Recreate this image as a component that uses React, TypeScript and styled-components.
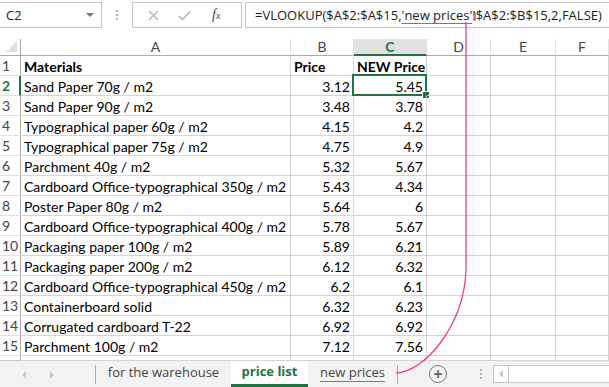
import React from 'react';
import styled, { createGlobalStyle } from 'styled-components';

const GREEN = '#217346';
const PINK = '#f0407a';
const GRID = '#d4d4d4';
const HEAD_LINE = '#ababab';

const rows: [string, string, string][] = [
    ['Sand Paper 70g / m2', '3.12', '5.45'],
    ['Sand Paper 90g / m2', '3.48', '3.78'],
    ['Typographical paper 60g / m2', '4.15', '4.2'],
    ['Typographical paper 75g / m2', '4.75', '4.9'],
    ['Parchment 40g / m2', '5.32', '5.67'],
    ['Cardboard Office-typographical 350g / m2', '5.43', '4.34'],
    ['Poster Paper 80g / m2', '5.64', '6'],
    ['Cardboard Office-typographical 400g / m2', '5.78', '5.67'],
    ['Packaging paper 100g / m2', '5.89', '6.21'],
    ['Packaging paper 200g / m2', '6.12', '6.32'],
    ['Cardboard Office-typographical 450g / m2', '6.2', '6.1'],
    ['Containerboard solid', '6.32', '6.23'],
    ['Corrugated cardboard T-22', '6.92', '6.92'],
    ['Parchment 100g / m2', '7.12', '7.56'],
];

const columns = ['A', 'B', 'C', 'D', 'E', 'F'];

const GlobalStyle = createGlobalStyle`
    html, body {
        margin: 0;
        padding: 0;
        background: #ffffff;
        overflow: hidden;
    }
    * {
        box-sizing: border-box;
    }
`;

const Page = styled.div`
    position: relative;
    width: 609px;
    height: 387px;
    overflow: hidden;
    background: #ffffff;
    font-family: 'Lato', 'Liberation Sans', sans-serif;
    display: flex;
    flex-direction: column;
`;

const FormulaBar = styled.div`
    height: 39px;
    flex: none;
    display: flex;
    align-items: flex-start;
    padding-top: 2px;
    font-family: 'Open Sans', 'Liberation Sans', sans-serif;
    font-size: 13px;
    color: #222;
`;

const NameBox = styled.div`
    width: 102px;
    height: 26px;
    border: 1px solid #c6c6c6;
    display: flex;
    align-items: center;
    justify-content: space-between;
    padding: 0 7px 0 6px;
    border-left: none;
`;

const DropArrow = styled.span`
    width: 0;
    height: 0;
    border-left: 4px solid transparent;
    border-right: 4px solid transparent;
    border-top: 4px solid #777;
`;

const Grip = styled.div`
    width: 30px;
    height: 26px;
    display: flex;
    flex-direction: column;
    align-items: center;
    justify-content: center;
    gap: 2px;
    & span {
        width: 2px;
        height: 2px;
        background: #b5b5b5;
    }
`;

const ActionBox = styled.div`
    width: 110px;
    height: 26px;
    border: 1px solid #c6c6c6;
    display: flex;
    align-items: center;
    padding-left: 15px;
    gap: 19px;
    color: #a6a6a6;
`;

const Fx = styled.span`
    font-family: 'Liberation Serif', serif;
    font-style: italic;
    font-size: 14px;
    color: #444;
    margin-left: 2px;
`;

const FormulaInput = styled.div`
    flex: 1;
    height: 26px;
    margin-left: 3px;
    border: 1px solid #c6c6c6;
    border-right: none;
    display: flex;
    align-items: center;
    padding-left: 9px;
    white-space: nowrap;
    overflow: hidden;
`;

const Marked = styled.span`
    text-decoration: underline;
    text-decoration-color: ${PINK};
    text-underline-offset: 3px;
`;

const Sheet = styled.div`
    flex: none;
    display: grid;
    grid-template-columns: 21px 270px 63px 73px 64px 65px 1fr;
    grid-template-rows: 17px repeat(15, 20px) 5px;
    font-size: 14px;
    color: #000;
`;

const Corner = styled.div`
    border-right: 1px solid ${HEAD_LINE};
    border-bottom: 1px solid ${HEAD_LINE};
    position: relative;
    &::after {
        content: '';
        position: absolute;
        right: 3px;
        bottom: 3px;
        width: 0;
        height: 0;
        border-left: 11px solid transparent;
        border-bottom: 11px solid #dfdfdf;
    }
`;

const ColHead = styled.div<{ $active?: boolean }>`
    display: flex;
    align-items: center;
    justify-content: center;
    font-size: 14px;
    line-height: 1;
    color: ${(p) => (p.$active ? GREEN : '#444')};
    font-weight: ${(p) => (p.$active ? 700 : 400)};
    background: ${(p) => (p.$active ? '#e1e1e1' : '#fff')};
    border-right: 1px solid #e1e1e1;
    border-bottom: ${(p) => (p.$active ? `2px solid ${GREEN}` : `1px solid ${HEAD_LINE}`)};
`;

const RowHead = styled.div<{ $active?: boolean }>`
    display: flex;
    align-items: center;
    padding-left: 2px;
    font-size: 14px;
    color: ${(p) => (p.$active ? GREEN : '#444')};
    font-weight: ${(p) => (p.$active ? 700 : 400)};
    border-right: ${(p) => (p.$active ? `2px solid ${GREEN}` : `1px solid ${HEAD_LINE}`)};
    border-bottom: 1px solid #e1e1e1;
`;

const Cell = styled.div<{ $num?: boolean; $bold?: boolean }>`
    display: flex;
    align-items: center;
    justify-content: ${(p) => (p.$num ? 'flex-end' : 'flex-start')};
    padding: 1px 3px 0 3px;
    font-weight: ${(p) => (p.$bold ? 700 : 400)};
    border-right: 1px solid ${GRID};
    border-bottom: 1px solid ${GRID};
    white-space: nowrap;
    overflow: hidden;
    position: relative;
`;

const Selected = styled(Cell)`
    overflow: visible;
    &::before {
        content: '';
        position: absolute;
        left: -2px;
        top: -2px;
        right: -1px;
        bottom: -1px;
        border: 2px solid ${GREEN};
    }
    &::after {
        content: '';
        position: absolute;
        right: -4px;
        bottom: -4px;
        width: 6px;
        height: 6px;
        background: ${GREEN};
        border: 1px solid #fff;
    }
`;

const TabBar = styled.div`
    flex: 1;
    margin-top: -1px;
    background: #f3f3f3;
    border-top: 1px solid #c6c6c6;
    display: flex;
    align-items: stretch;
    font-family: 'Open Sans', 'Liberation Sans', sans-serif;
    font-size: 13px;
    color: #444;
`;

const NavArrows = styled.div`
    width: 96px;
    display: flex;
    align-items: center;
    padding-left: 22px;
    gap: 24px;
    border-right: 1px solid #ababab;
    margin: 4px 0 3px;
`;

const Arrow = styled.span<{ $dir: 'left' | 'right' }>`
    width: 0;
    height: 0;
    border-top: 4px solid transparent;
    border-bottom: 4px solid transparent;
    ${(p) => (p.$dir === 'left' ? 'border-right: 4px solid #c8c8c8;' : 'border-left: 4px solid #c8c8c8;')}
`;

const Tab = styled.div<{ $active?: boolean; $w: number }>`
    width: ${(p) => p.$w}px;
    display: flex;
    align-items: center;
    justify-content: center;
    padding-bottom: 2px;
    background: ${(p) => (p.$active ? '#fff' : 'transparent')};
    color: ${(p) => (p.$active ? GREEN : '#444')};
    font-weight: ${(p) => (p.$active ? 700 : 400)};
    border-bottom: ${(p) => (p.$active ? `3px solid ${GREEN}` : '3px solid transparent')};
    margin-top: ${(p) => (p.$active ? '-1px' : '0')};
`;

const TabDivider = styled.div`
    width: 1px;
    background: #ababab;
    margin: 4px 0 3px;
`;

const PinkLabel = styled.span`
    text-decoration: underline;
    text-decoration-color: ${PINK};
    text-underline-offset: 4px;
`;

const AddButton = styled.div`
    width: 18px;
    height: 18px;
    margin: 4px 0 0 31px;
    border: 1.5px solid #777;
    border-radius: 50%;
    display: flex;
    align-items: center;
    justify-content: center;
    color: #666;
    font-size: 16px;
    line-height: 1;
    font-weight: 700;
`;

const Dots = styled(Grip)`
    width: 10px;
    height: auto;
    margin-left: 29px;
`;

const Scroll = styled.div`
    flex: 1;
    margin: 4px 0 4px 7px;
    border: 1px solid #c6c6c6;
    border-right: none;
    background: #fff;
    display: flex;
`;

const ScrollBtn = styled.div`
    width: 15px;
    border-right: 1px solid #c6c6c6;
    display: flex;
    align-items: center;
    justify-content: center;
`;

const Annotation = styled.svg`
    position: absolute;
    left: 0;
    top: 0;
    pointer-events: none;
`;

export default function App() {
    return (
        <Page>
            <GlobalStyle />
            <FormulaBar>
                <NameBox>
                    <span>C2</span>
                    <DropArrow />
                </NameBox>
                <Grip>
                    <span />
                    <span />
                    <span />
                </Grip>
                <ActionBox>
                    <svg width="11" height="11" viewBox="0 0 11 11">
                        <path d="M1 1 L10 10 M10 1 L1 10" stroke="#b0b0b0" strokeWidth="1.3" />
                    </svg>
                    <svg width="13" height="11" viewBox="0 0 13 11">
                        <path d="M1 6 L4.5 9.5 L12 1.5" stroke="#b0b0b0" strokeWidth="1.5" fill="none" />
                    </svg>
                    <Fx>
                        f<sub style={{ fontSize: 10, verticalAlign: 0 }}>x</sub>
                    </Fx>
                </ActionBox>
                <FormulaInput>
                    =VLOOKUP($A$2:$A$15,<Marked>'new prices'</Marked>!$A$2:$B$15,2,FALSE)
                </FormulaInput>
            </FormulaBar>
            <Sheet>
                <Corner />
                {columns.map((c) => (
                    <ColHead key={c} $active={c === 'C'}>
                        {c}
                    </ColHead>
                ))}
                <RowHead>1</RowHead>
                <Cell $bold>Materials</Cell>
                <Cell $bold>Price</Cell>
                <Cell $bold>NEW Price</Cell>
                <Cell />
                <Cell />
                <Cell />
                {rows.map(([name, price, next], i) => (
                    <React.Fragment key={name + i}>
                        <RowHead $active={i === 0}>{i + 2}</RowHead>
                        <Cell>{name}</Cell>
                        <Cell $num>{price}</Cell>
                        {i === 0 ? <Selected $num>{next}</Selected> : <Cell $num>{next}</Cell>}
                        <Cell />
                        <Cell />
                        <Cell />
                    </React.Fragment>
                ))}
                <RowHead />
                <Cell />
                <Cell />
                <Cell />
                <Cell />
                <Cell />
                <Cell />
            </Sheet>
            <TabBar>
                <NavArrows>
                    <Arrow $dir="left" />
                    <Arrow $dir="right" />
                </NavArrows>
                <Tab $w={135}>for the warehouse</Tab>
                <Tab $w={77} $active>
                    price list
                </Tab>
                <Tab $w={89}>
                    <PinkLabel>new prices</PinkLabel>
                </Tab>
                <TabDivider />
                <AddButton>+</AddButton>
                <Dots>
                    <span />
                    <span />
                    <span />
                </Dots>
                <Scroll>
                    <ScrollBtn>
                        <Arrow $dir="left" />
                    </ScrollBtn>
                </Scroll>
            </TabBar>
            <Annotation width="609" height="387" viewBox="0 0 609 387">
                <path d="M475 13 L475 21 M466 22 L466 270 C464 325 425 372 396 373" stroke={PINK} strokeWidth="1.3" fill="none" />
            </Annotation>
        </Page>
    );
}
